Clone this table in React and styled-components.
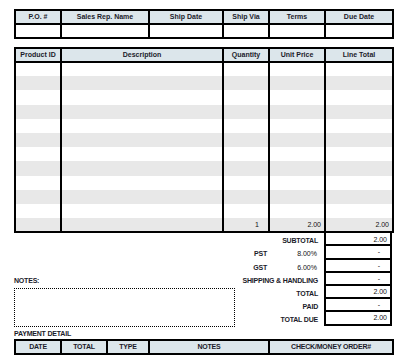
import styled, { createGlobalStyle } from 'styled-components';

const GlobalStyle = createGlobalStyle`
    body {
        margin: 0;
        background: #fff;
        font-family: "Liberation Sans", Arial, sans-serif;
        color: #111;
    }
`;

const topCols = ['P.O. #', 'Sales Rep. Name', 'Ship Date', 'Ship Via', 'Terms', 'Due Date'];
const topWidths = [46, 88, 74, 46, 56, 68];

const itemCols = ['Product ID', 'Description', 'Quantity', 'Unit Price', 'Line Total'];
const itemWidths = [46, 162, 46, 56, 68];

const payCols = ['DATE', 'TOTAL', 'TYPE', 'NOTES', 'CHECK/MONEY ORDER#'];
const payWidths = [46, 46, 42, 120, 124];

const rows = Array.from({ length: 12 }, (_, i) => i);

const totals = [
    { label: 'SUBTOTAL', value: '2.00' },
    { label: 'PST', rate: '8.00%', value: '-' },
    { label: 'GST', rate: '6.00%', value: '-' },
    { label: 'SHIPPING & HANDLING', value: '-' },
    { label: 'TOTAL', value: '2.00' },
    { label: 'PAID', value: '-' },
    { label: 'TOTAL DUE', value: '2.00' },
];

const App = () => {
    return (
        <Page>
            <GlobalStyle />

            <Table>
                <colgroup>
                    {topWidths.map((w, i) => <col key={i} width={w} />)}
                </colgroup>
                <thead>
                    <tr>
                        {topCols.map((c) => <HeadCell key={c}>{c}</HeadCell>)}
                    </tr>
                </thead>
                <tbody>
                    <tr>
                        {topCols.map((c) => <BoxCell key={c} />)}
                    </tr>
                </tbody>
            </Table>

            <Table $gap="8px">
                <colgroup>
                    {itemWidths.map((w, i) => <col key={i} width={w} />)}
                </colgroup>
                <thead>
                    <tr>
                        {itemCols.map((c) => <HeadCell key={c}>{c}</HeadCell>)}
                    </tr>
                </thead>
                <tbody>
                    {rows.map((r) => (
                        <ItemRow key={r} $shade={r % 2 === 1}>
                            <ItemCell />
                            <ItemCell />
                            <ItemCell>{r === rows.length - 1 ? '1' : ''}</ItemCell>
                            <ItemCell>{r === rows.length - 1 ? '2.00' : ''}</ItemCell>
                            <ItemCell>{r === rows.length - 1 ? '2.00' : ''}</ItemCell>
                        </ItemRow>
                    ))}
                </tbody>
            </Table>

            <Bottom>
                <NotesColumn>
                    <Label>NOTES:</Label>
                    <NotesBox />
                </NotesColumn>
                <TotalsGrid>
                    {totals.map((t, i) => (
                        <TotalRow key={t.label}>
                            {t.rate ? (
                                <>
                                    <TotalLabel>{t.label}</TotalLabel>
                                    <RateCell>{t.rate}</RateCell>
                                </>
                            ) : (
                                <TotalLabel $wide>{t.label}</TotalLabel>
                            )}
                            <ValueBox $first={i === 0} $dash={t.value === '-'}>{t.value}</ValueBox>
                        </TotalRow>
                    ))}
                </TotalsGrid>
            </Bottom>

            <Label $pay>PAYMENT DETAIL</Label>
            <Table>
                <colgroup>
                    {payWidths.map((w, i) => <col key={i} width={w} />)}
                </colgroup>
                <thead>
                    <tr>
                        {payCols.map((c) => <HeadCell key={c} $caps>{c}</HeadCell>)}
                    </tr>
                </thead>
            </Table>
        </Page>
    );
};

export default App;

const Page = styled.div`
    width: 378px;
    padding: 9px 0 0 14px;
`;

const Table = styled.table`
    width: 378px;
    border-collapse: collapse;
    table-layout: fixed;
    margin-top: ${(props) => props.$gap || '0'};
`;

const HeadCell = styled.th`
    height: 12px;
    padding: 0;
    background: #dce6eb;
    border: 2px solid #000;
    font-size: 7px;
    line-height: 10px;
    font-weight: bold;
    text-align: center;
    color: #1b1b2a;
    letter-spacing: ${(props) => (props.$caps ? '-0.2px' : '0')};
`;

const BoxCell = styled.td`
    height: 12px;
    padding: 0;
    border: 2px solid #000;
`;

const ItemRow = styled.tr`
    background: ${(props) => (props.$shade ? '#e8e8e8' : '#fff')};
    height: 14.2px;

    &:last-child td {
        border-bottom: 2px solid #000;
    }
`;

const ItemCell = styled.td`
    padding: 0 3px 0 0;
    border-left: 2px solid #000;
    border-right: 2px solid #000;
    font-size: 7px;
    text-align: right;
    vertical-align: middle;
    line-height: 10px;

    &:nth-child(3) {
        padding-right: 9px;
    }
`;

const Bottom = styled.div`
    display: flex;
`;

const NotesColumn = styled.div`
    width: 221px;
    display: flex;
    flex-direction: column;
    padding-top: 41px;
`;

const Label = styled.div`
    font-size: 7px;
    font-weight: bold;
    letter-spacing: -0.2px;
    line-height: ${(props) => (props.$pay ? '10px' : '14px')};
    margin: ${(props) => (props.$pay ? '2px 0 0' : '0')};
    color: #1b1b2a;
`;

const NotesBox = styled.div`
    height: 37px;
    border: 1px dotted #000;
`;

const TotalsGrid = styled.div`
    width: 157px;
    display: flex;
    flex-direction: column;
`;

const TotalRow = styled.div`
    display: grid;
    grid-template-columns: 33px 56px 68px;
    height: 13.2px;
    font-size: 7px;
    line-height: 15px;
`;

const TotalLabel = styled.div`
    grid-column: ${(props) => (props.$wide ? '1 / 3' : 'auto')};
    text-align: right;
    padding-right: ${(props) => (props.$wide ? '6px' : '1px')};
    font-weight: bold;
    letter-spacing: -0.2px;
    white-space: nowrap;
    color: #1b1b2a;
`;

const RateCell = styled.div`
    text-align: right;
    padding-right: 7px;
`;

const ValueBox = styled.div`
    grid-column: 3;
    border: 2px solid #000;
    border-top: ${(props) => (props.$first ? 'none' : '2px solid #000')};
    margin-top: ${(props) => (props.$first ? '0' : '-2px')};
    height: ${(props) => (props.$first ? '13.2px' : '15.2px')};
    box-sizing: border-box;
    text-align: right;
    padding-right: ${(props) => (props.$dash ? '10px' : '3px')};
    line-height: ${(props) => (props.$first ? '13px' : '11px')};
`;
